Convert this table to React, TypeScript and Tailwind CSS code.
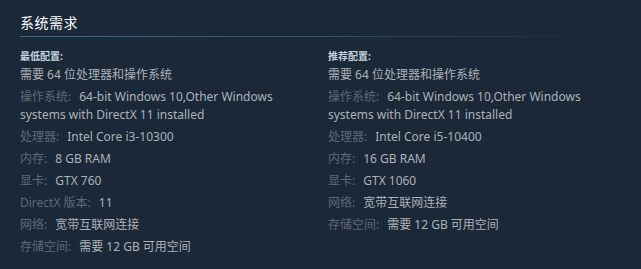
const minimum = [
  { value: "需要 64 位处理器和操作系统" },
  { label: "操作系统:", value: "64-bit Windows 10,Other Windows systems with DirectX 11 installed" },
  { label: "处理器:", value: "Intel Core i3-10300" },
  { label: "内存:", value: "8 GB RAM" },
  { label: "显卡:", value: "GTX 760" },
  { label: "DirectX 版本:", value: "11" },
  { label: "网络:", value: "宽带互联网连接" },
  { label: "存储空间:", value: "需要 12 GB 可用空间" },
]

const recommended = [
  { value: "需要 64 位处理器和操作系统" },
  { label: "操作系统:", value: "64-bit Windows 10,Other Windows systems with DirectX 11 installed" },
  { label: "处理器:", value: "Intel Core i5-10400" },
  { label: "内存:", value: "16 GB RAM" },
  { label: "显卡:", value: "GTX 1060" },
  { label: "网络:", value: "宽带互联网连接" },
  { label: "存储空间:", value: "需要 12 GB 可用空间" },
]

type Row = { label?: string; value: string }

function ReqColumn({ title, rows }: { title: string; rows: Row[] }) {
  return (
    <div className="w-[290px] shrink-0">
      <strong className="block text-[10px] leading-[14px] font-bold text-[#c6d4df]">{title}</strong>
      <ul className="mt-[3px]">
        {rows.map((r, i) => (
          <li key={i} className="mb-[4px] text-[12px] leading-[18px] text-[#acb2b8]">
            {r.label && <span className="text-[#5d6a75] mr-[8px]">{r.label}</span>}
            {r.value}
          </li>
        ))}
      </ul>
    </div>
  )
}

export default function App() {
  return (
    <div
      className="w-[641px] h-[269px] bg-[#1b2838] px-[20px] pt-[13px]"
      style={{ fontFamily: '"Noto Sans", "Noto Sans CJK SC", sans-serif' }}
    >
      <h2 className="text-[14px] leading-[20px] text-white tracking-[0.5px] pb-[3px]">系统需求</h2>
      <div className="h-px w-[580px] bg-gradient-to-r from-[#3d6c8d] via-[#2e5470] to-transparent" />
      <div className="flex gap-[18px] mt-[12px]">
        <ReqColumn title="最低配置:" rows={minimum} />
        <ReqColumn title="推荐配置:" rows={recommended} />
      </div>
    </div>
  )
}
